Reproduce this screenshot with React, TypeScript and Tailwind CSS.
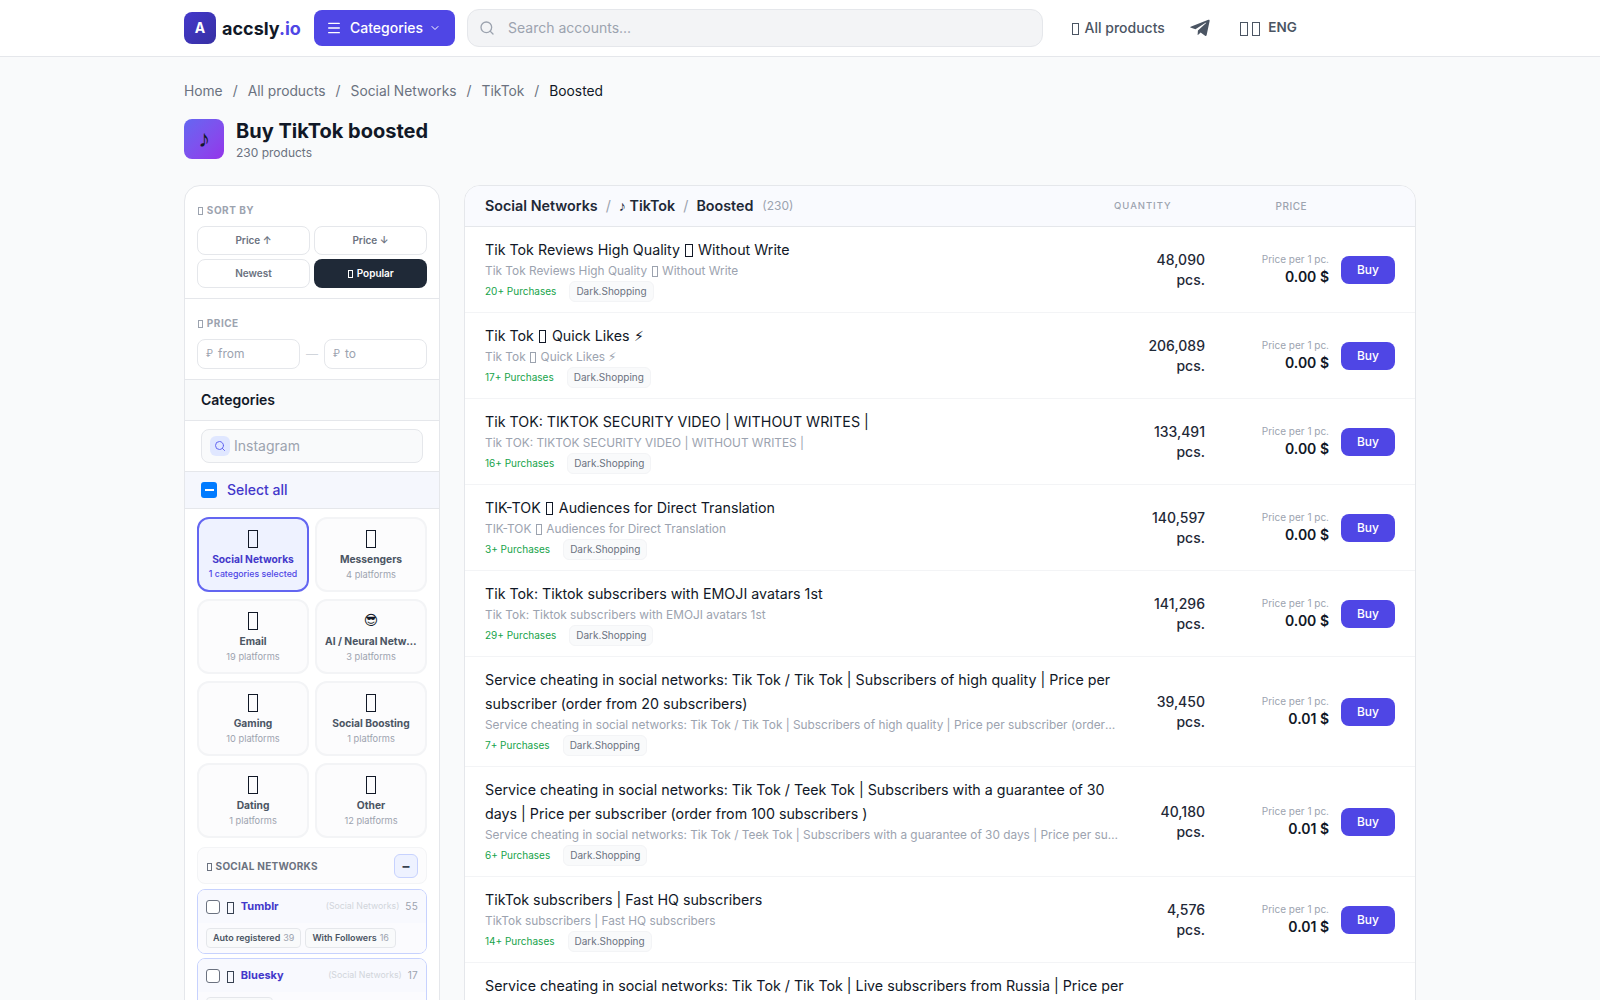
import { Fragment } from "react";
import { Menu, ChevronDown, Search } from "lucide-react";
import { FaTelegramPlane } from "react-icons/fa";

// emoji without a font show as empty boxes in the page
const BOX = "[]";

function Box() {
  return <span className="mx-[.1em] inline-block h-[.88em] w-[.5em] border border-current align-[-.14em]" />;
}

function WithBoxes({ text }: { text: string }) {
  const parts = text.split(BOX);
  return (
    <>
      {parts.map((part, i) => (
        <Fragment key={i}>
          {i > 0 && <Box />}
          {part}
        </Fragment>
      ))}
    </>
  );
}

const products = [
  { title: `Tik Tok Reviews High Quality ${BOX} Without Write`, sold: "20+", qty: "48,090", price: "0.00" },
  { title: `Tik Tok ${BOX} Quick Likes \u26A1\uFE0E`, sold: "17+", qty: "206,089", price: "0.00" },
  { title: "Tik TOK: TIKTOK SECURITY VIDEO | WITHOUT WRITES |", sold: "16+", qty: "133,491", price: "0.00" },
  { title: `TIK-TOK ${BOX} Audiences for Direct Translation`, sold: "3+", qty: "140,597", price: "0.00" },
  { title: "Tik Tok: Tiktok subscribers with EMOJI avatars 1st", sold: "29+", qty: "141,296", price: "0.00" },
  {
    title: "Service cheating in social networks: Tik Tok / Tik Tok | Subscribers of high quality | Price per subscriber (order from 20 subscribers)",
    sold: "7+",
    qty: "39,450",
    price: "0.01",
  },
  {
    title: "Service cheating in social networks: Tik Tok / Teek Tok | Subscribers with a guarantee of 30 days | Price per subscriber (order from 100 subscribers )",
    sold: "6+",
    qty: "40,180",
    price: "0.01",
  },
  { title: "TikTok subscribers | Fast HQ subscribers", sold: "14+", qty: "4,576", price: "0.01" },
  {
    title: "Service cheating in social networks: Tik Tok / Tik Tok | Live subscribers from Russia | Price per subscriber (order from 10 subscribers)",
    sold: "5+",
    qty: "12,300",
    price: "0.01",
  },
];

const categories = [
  { icon: BOX, name: "Social Networks", sub: "1 categories selected", active: true },
  { icon: BOX, name: "Messengers", sub: "4 platforms" },
  { icon: BOX, name: "Email", sub: "19 platforms" },
  { icon: "\u{1F60E}\uFE0E", name: "AI / Neural Networks", sub: "3 platforms", small: true },
  { icon: BOX, name: "Gaming", sub: "10 platforms" },
  { icon: BOX, name: "Social Boosting", sub: "1 platforms" },
  { icon: BOX, name: "Dating", sub: "1 platforms" },
  { icon: BOX, name: "Other", sub: "12 platforms" },
];

function Navbar() {
  return (
    <header className="h-[57px] shrink-0 border-b border-[#e5e7eb] bg-white">
      <div className="mx-auto flex h-14 max-w-7xl items-center px-6">
        <div className="flex h-8 w-8 items-center justify-center rounded-lg bg-gradient-to-br from-[#4338ca] to-[#3730a3] text-sm font-bold text-white">
          A
        </div>
        <div className="ml-[6px] w-[80px] text-[18px] font-bold text-[#111827]">
          accsly<span className="text-[#4f46e5]">.io</span>
        </div>
        <button className="ml-3 flex h-9 w-[141px] items-center justify-center gap-2 rounded-lg bg-[#4f46e5] text-sm font-medium text-white">
          <Menu className="h-4 w-4" />
          Categories
          <ChevronDown className="-ml-[2px] mr-[2px] h-3 w-3" />
        </button>
        <div className="ml-3 flex h-[38px] w-[576px] items-center rounded-xl border border-[#e5e7eb] bg-[#f3f4f6] pl-[11px] text-sm text-[#9ca3af]">
          <Search className="h-4 w-4" />
          <span className="ml-[13px]">Search accounts...</span>
        </div>
        <div className="ml-7 flex items-center text-sm font-medium text-[#4b5563]">
          <span><Box /> All products</span>
          <FaTelegramPlane className="ml-6 h-[22px] w-[22px]" />
          <span className="ml-7 text-base"><Box /><Box /></span>
          <span className="ml-[7px] text-[13.5px] font-semibold">ENG</span>
        </div>
      </div>
    </header>
  );
}

function Sidebar() {
  return (
    <aside className="w-64 shrink-0 self-start rounded-2xl border border-[#e5e7eb] bg-white">
      <div className="border-b border-[#e5e7eb] px-3 pb-[10px] pt-[17px]">
        <div className="text-[10px] font-bold uppercase tracking-wider text-[#9ca3af]"><Box /> Sort by</div>
        <div className="mt-2 grid grid-cols-2 gap-1">
          <button className="h-[29px] rounded-lg border border-[#e5e7eb] text-[10px] font-semibold text-[#6b7280]">Price ↑</button>
          <button className="h-[29px] rounded-lg border border-[#e5e7eb] text-[10px] font-semibold text-[#6b7280]">Price ↓</button>
          <button className="h-[29px] rounded-lg border border-[#e5e7eb] text-[10px] font-semibold text-[#6b7280]">Newest</button>
          <button className="h-[29px] rounded-lg bg-[#1f2937] text-[10px] font-semibold text-white"><Box /> Popular</button>
        </div>
      </div>
      <div className="border-b border-[#e5e7eb] px-3 pb-[10px] pt-[17px]">
        <div className="text-[10px] font-bold uppercase tracking-wider text-[#9ca3af]"><Box /> Price</div>
        <div className="mt-2 flex items-center justify-between">
          <div className="flex h-[30px] w-[103px] items-center rounded-lg border border-[#e5e7eb] pl-2 text-xs text-[#9ca3af]">
            <span className="text-[10px]">₽</span>
            <span className="ml-[5px]">from</span>
          </div>
          <span className="text-xs text-[#d1d5db]">—</span>
          <div className="flex h-[30px] w-[103px] items-center rounded-lg border border-[#e5e7eb] pl-2 text-xs text-[#9ca3af]">
            <span className="text-[10px]">₽</span>
            <span className="ml-[5px]">to</span>
          </div>
        </div>
      </div>
      <div className="flex h-[41px] items-center border-b border-[#e5e7eb] bg-[#f9fafb] px-4 text-sm font-semibold text-[#111827]">
        Categories
      </div>
      <div className="border-b border-[#e5e7eb] px-4 py-2">
        <div className="flex h-[34px] items-center rounded-lg border border-[#e5e7eb] bg-[#f9fafb] pl-2 text-sm text-[#9ca3af]">
          <span className="flex h-5 w-5 items-center justify-center rounded-md bg-[#e0e7ff]">
            <Search className="h-3 w-3 text-[#6366f1]" />
          </span>
          <span className="ml-1">Instagram</span>
        </div>
      </div>
      <div className="flex h-[37px] items-center border-b border-[#e5e7eb] bg-[#f5f7fd] px-4">
        <span className="flex h-4 w-4 items-center justify-center rounded-[3px] bg-[#007bff]">
          <span className="h-[2px] w-[9px] bg-white" />
        </span>
        <span className="ml-[10px] text-sm font-medium text-[#4338ca]">Select all</span>
      </div>
      <div className="grid grid-cols-2 gap-x-[6px] gap-y-[7px] px-3 pt-2">
        {categories.map((c) => (
          <div
            key={c.name}
            className={
              c.active
                ? "flex h-[75px] flex-col items-center rounded-xl border-2 border-[#6366f1] bg-[#eef2ff] px-2 pt-[6px]"
                : "flex h-[75px] flex-col items-center rounded-xl border-2 border-[#f3f4f6] bg-[#fcfcfd] px-2 pt-[6px]"
            }
          >
            <div className={c.small ? "h-[27px] font-['DejaVu_Sans'] text-[14px] leading-[27px] text-[#111827]" : "h-[27px] text-[20px] leading-[27px] text-[#111827]"}>
              <WithBoxes text={c.icon} />
            </div>
            <div
              className={
                c.active
                  ? "w-full truncate text-center text-[10.25px] font-bold leading-[15px] text-[#4338ca]"
                  : "w-full truncate text-center text-[10.25px] font-bold leading-[15px] text-[#4b5563]"
              }
            >
              {c.name}
            </div>
            <div
              className={
                c.active
                  ? "whitespace-nowrap text-[8.75px] font-medium leading-[15px] text-[#4f46e5]"
                  : "whitespace-nowrap text-[9.25px] leading-[15px] text-[#9ca3af]"
              }
            >
              {c.sub}
            </div>
          </div>
        ))}
      </div>
      <div className="px-3 pt-[9px]">
        <div className="flex h-[37px] items-center justify-between rounded-lg border border-[#f3f4f6] bg-[#fcfcfd] pl-2 pr-2">
          <span className="pt-[2px] text-[10px] font-bold uppercase tracking-wide text-[#6b7280]"><Box /> Social Networks</span>
          <button className="flex h-6 w-6 items-center justify-center rounded-md border border-[#c7d2fe] bg-[#eef2ff] text-sm font-bold text-[#374151]">−</button>
        </div>
      </div>
      <div className="flex flex-col gap-[4px] px-3 pt-[5px]">
        <PlatformCard name="Tumblr" count="55" tags={[["Auto registered", "39"], ["With Followers", "16"]]} />
        <PlatformCard name="Bluesky" count="17" tags={[["Accounts", "17"]]} />
      </div>
    </aside>
  );
}

function PlatformCard({ name, count, tags }: { name: string; count: string; tags: string[][] }) {
  return (
    <div className="overflow-hidden rounded-lg border border-[#c7d2fe]">
      <div className="flex h-[33px] items-center bg-[#f8f9fe] pl-2 pr-2">
        <span className="h-[14px] w-[14px] rounded-[3px] border border-[#6b7280] bg-white" />
        <span className="ml-[6px] text-[14px] text-[#374151]"><Box /></span>
        <span className="ml-[5px] text-[11px] font-bold text-[#4338ca]">{name}</span>
        <span className="ml-auto text-[8.75px] text-[#d1d5db]">(Social Networks)</span>
        <span className="ml-[6px] text-[10px] tracking-wide text-[#9ca3af]">{count}</span>
      </div>
      <div className="flex gap-1 bg-[#fbfbfe] px-2 py-[5px]">
        {tags.map(([label, n]) => (
          <span key={label} className="flex h-5 items-center rounded border border-[#e5e7eb] bg-[#f9fafb] px-[6px] text-[9px] font-semibold text-[#4b5563]">
            {label}
            <span className="ml-[3px] font-normal text-[#9ca3af]">{n}</span>
          </span>
        ))}
      </div>
    </div>
  );
}

function ProductRow({ p }: { p: (typeof products)[number] }) {
  return (
    <div className="flex items-center border-b border-[#f3f4f6] pl-5 pr-5">
      <div className="w-[640px] min-w-0 pb-[10px] pt-[11px]">
        <div className="text-[14.25px] leading-6 text-[#111827]"><WithBoxes text={p.title} /></div>
        <div className="w-[633px] truncate text-[11.85px] leading-[18px] text-[#9ca3af]"><WithBoxes text={p.title} /></div>
        <div className="mt-[1px] flex items-center text-[10px]">
          <span className="text-[#16a34a]">{p.sold} Purchases</span>
          <span className="ml-[13px] flex h-[21px] items-center rounded-md border border-[#f3f4f6] bg-[#f9fafb] px-[6px] text-[#6b7280]">Dark.Shopping</span>
        </div>
      </div>
      <div className="w-[80px] shrink-0 text-right text-sm font-medium leading-5 text-[#1f2937]">
        <div>{p.qty}</div>
        <div>pcs.</div>
      </div>
      <div className="w-[124px] shrink-0 pb-[2px] text-right">
        <div className="text-[10px] leading-4 text-[#9ca3af]">Price per 1 pc.</div>
        <div className="text-sm font-semibold leading-5 text-[#111827]">{p.price} $</div>
      </div>
      <button className="ml-3 h-7 w-[54px] shrink-0 rounded-lg bg-[#4f46e5] text-xs font-medium text-white">Buy</button>
    </div>
  );
}

export default function App() {
  return (
    <div className="flex h-screen flex-col overflow-hidden bg-[#f9fafb] font-['Inter',sans-serif]">
      <Navbar />
      <main className="mx-auto w-full max-w-7xl px-6">
        <nav className="mt-6 flex items-center text-[13.8px] leading-5 text-[#6b7280]">
          <span>Home</span>
          <span className="mx-[10px]">/</span>
          <span>All products</span>
          <span className="mx-[10px]">/</span>
          <span>Social Networks</span>
          <span className="mx-[10px]">/</span>
          <span>TikTok</span>
          <span className="mx-[10px]">/</span>
          <span className="text-[#111827]">Boosted</span>
        </nav>
        <div className="mt-4 flex items-center">
          <div className="flex h-10 w-10 items-center justify-center rounded-lg bg-gradient-to-br from-[#6366f1] to-[#9333ea] text-2xl text-[#111827]">♪</div>
          <div className="ml-3">
            <h1 className="text-xl font-bold leading-7 text-[#111827]">Buy TikTok boosted</h1>
            <p className="text-xs leading-4 text-[#6b7280]">230 products</p>
          </div>
        </div>
        <div className="mt-6 flex items-start gap-6">
          <Sidebar />
          <section className="min-w-0 flex-1 overflow-hidden rounded-2xl border border-[#e5e7eb] bg-white">
            <div className="flex h-[41px] items-center border-b border-[#e5e7eb] bg-[#f9fafe] pl-5 text-[14.3px] font-semibold text-[#1f2937]">
              <span>Social Networks</span>
              <span className="mx-[8px] font-normal text-[#9ca3af]">/</span>
              <span>♪ TikTok</span>
              <span className="mx-[8px] font-normal text-[#9ca3af]">/</span>
              <span>Boosted</span>
              <span className="ml-[9px] text-xs font-normal text-[#9ca3af]">(230)</span>
              <span className="ml-auto text-[9.5px] font-medium uppercase tracking-widest text-[#9ca3af]">Quantity</span>
              <span className="ml-[104px] mr-[108px] text-[10px] font-medium uppercase tracking-wider text-[#9ca3af]">Price</span>
            </div>
            {products.map((p) => (
              <ProductRow key={p.qty} p={p} />
            ))}
          </section>
        </div>
      </main>
    </div>
  );
}
